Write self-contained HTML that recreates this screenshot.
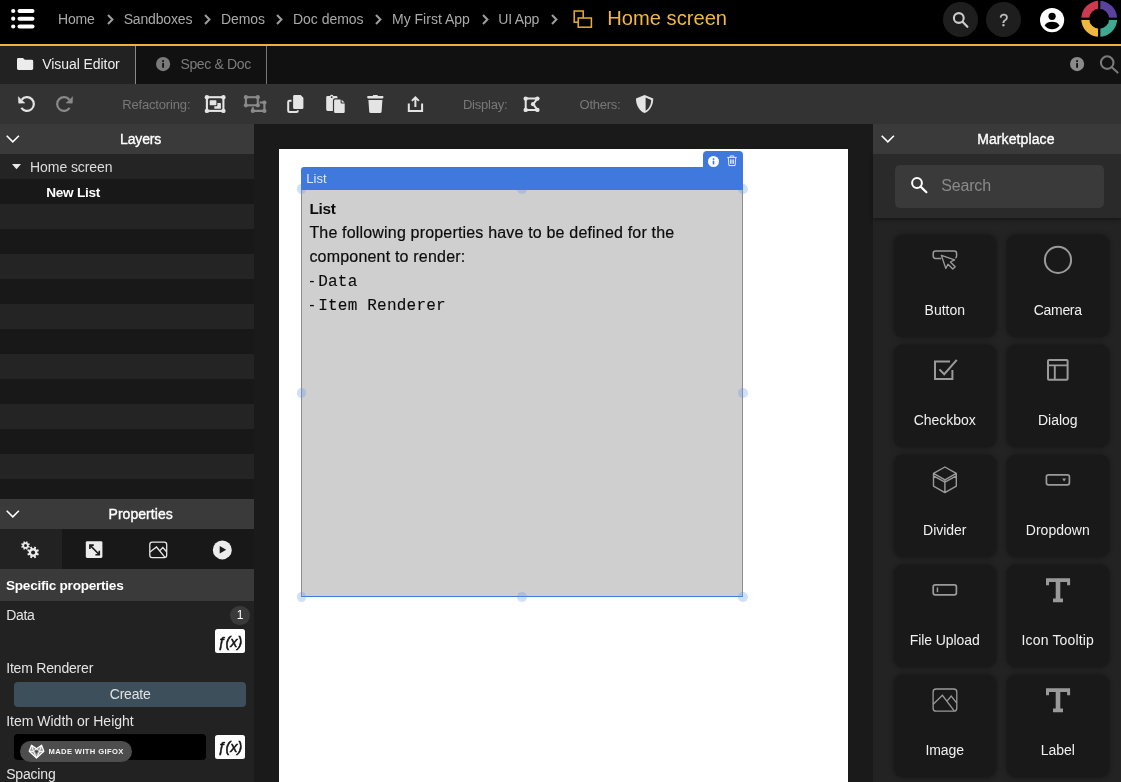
<!DOCTYPE html>
<html>
<head>
<meta charset="utf-8">
<style>
*{box-sizing:border-box;margin:0;padding:0}
html,body{width:1121px;height:782px;overflow:hidden;background:#1a1a1a}
body{font-family:"Liberation Sans",sans-serif;position:relative;color:#fff}
#w{position:absolute;left:0;top:0;width:1121px;height:782px;will-change:transform}
.abs{position:absolute}
.t{position:absolute;white-space:nowrap;line-height:1}
svg{position:absolute;overflow:visible}
</style>
</head>
<body>
<div id="w">
<div class="abs" style="left:0px;top:0px;width:1121px;height:44px;background:#000;"></div>
<div class="abs" style="left:0px;top:44px;width:1121px;height:2px;background:#f2b03a;"></div>
<div class="abs" style="left:0px;top:46px;width:1121px;height:38px;background:#111;"></div>
<div class="abs" style="left:0px;top:46px;width:135px;height:38px;background:#222;"></div>
<div class="abs" style="left:135px;top:46px;width:1px;height:38px;background:#8a8a8a;"></div>
<div class="abs" style="left:266px;top:46px;width:1px;height:38px;background:#777;"></div>
<div class="abs" style="left:0px;top:84px;width:1121px;height:40px;background:#333;"></div>
<div class="abs" style="left:0px;top:124px;width:254px;height:658px;background:#181818;"></div>
<div class="abs" style="left:0px;top:124px;width:254px;height:30px;background:#3a3a3a;"></div>
<div class="abs" style="left:0px;top:154px;width:254px;height:25px;background:#242424;"></div>
<div class="abs" style="left:0px;top:179px;width:254px;height:25px;background:#181818;"></div>
<div class="abs" style="left:0px;top:204px;width:254px;height:25px;background:#242424;"></div>
<div class="abs" style="left:0px;top:229px;width:254px;height:25px;background:#181818;"></div>
<div class="abs" style="left:0px;top:254px;width:254px;height:25px;background:#242424;"></div>
<div class="abs" style="left:0px;top:279px;width:254px;height:25px;background:#181818;"></div>
<div class="abs" style="left:0px;top:304px;width:254px;height:25px;background:#242424;"></div>
<div class="abs" style="left:0px;top:329px;width:254px;height:25px;background:#181818;"></div>
<div class="abs" style="left:0px;top:354px;width:254px;height:25px;background:#242424;"></div>
<div class="abs" style="left:0px;top:379px;width:254px;height:25px;background:#181818;"></div>
<div class="abs" style="left:0px;top:404px;width:254px;height:25px;background:#242424;"></div>
<div class="abs" style="left:0px;top:429px;width:254px;height:25px;background:#181818;"></div>
<div class="abs" style="left:0px;top:454px;width:254px;height:25px;background:#242424;"></div>
<div class="abs" style="left:0px;top:479px;width:254px;height:20px;background:#181818;"></div>
<div class="abs" style="left:0px;top:499px;width:254px;height:30px;background:#3a3a3a;"></div>
<div class="abs" style="left:0px;top:529px;width:254px;height:40px;background:#181818;"></div>
<div class="abs" style="left:0px;top:529px;width:62px;height:40px;background:#222;"></div>
<div class="abs" style="left:0px;top:569px;width:254px;height:32px;background:#3a3a3a;"></div>
<div class="abs" style="left:0px;top:601px;width:254px;height:181px;background:#222;"></div>
<div class="abs" style="left:279px;top:149px;width:569px;height:633px;background:#fff;"></div>
<div class="abs" style="left:873px;top:124px;width:248px;height:658px;background:#232323;"></div>
<div class="abs" style="left:873px;top:154px;width:248px;height:64px;background:#2a2a2a;box-shadow:0 2px 4px rgba(0,0,0,.35);"></div>
<div class="abs" style="left:873px;top:124px;width:248px;height:30px;background:#3a3a3a;"></div>
<svg style="left:0px;top:0px;" width="44" height="44" viewBox="0 0 44 44"><circle cx="13.2" cy="11" r="2.1" fill="#fff"/><rect x="17.5" y="9" width="17" height="4" rx="2" fill="#fff"/><circle cx="13.2" cy="18.7" r="2.1" fill="#fff"/><rect x="17.5" y="16.7" width="17" height="4" rx="2" fill="#fff"/><circle cx="13.2" cy="26.5" r="2.1" fill="#fff"/><rect x="17.5" y="24.5" width="17" height="4" rx="2" fill="#fff"/></svg>
<div class="t" style="left:58.10px;top:12.000px;font-size:14px;color:#a9a9a9;font-weight:400;letter-spacing:-0.187px;">Home</div>
<div class="t" style="left:123.70px;top:12.000px;font-size:14px;color:#a9a9a9;font-weight:400;letter-spacing:-0.167px;">Sandboxes</div>
<div class="t" style="left:221.00px;top:12.000px;font-size:14px;color:#a9a9a9;font-weight:400;letter-spacing:-0.095px;">Demos</div>
<div class="t" style="left:293.00px;top:12.000px;font-size:14px;color:#a9a9a9;font-weight:400;letter-spacing:-0.028px;">Doc demos</div>
<div class="t" style="left:392.00px;top:12.000px;font-size:14px;color:#a9a9a9;font-weight:400;letter-spacing:0.000px;">My First App</div>
<div class="t" style="left:498.30px;top:12.000px;font-size:14px;color:#a9a9a9;font-weight:400;letter-spacing:-0.200px;">UI App</div>
<svg style="left:106.8px;top:13.6px;" width="6.6" height="11" viewBox="0 0 6.6 11"><path d="M1 1 L5.4 5.5 L1 10" fill="none" stroke="#9c9c9c" stroke-width="2.1"/></svg>
<svg style="left:203.8px;top:13.6px;" width="6.6" height="11" viewBox="0 0 6.6 11"><path d="M1 1 L5.4 5.5 L1 10" fill="none" stroke="#9c9c9c" stroke-width="2.1"/></svg>
<svg style="left:275.8px;top:13.6px;" width="6.6" height="11" viewBox="0 0 6.6 11"><path d="M1 1 L5.4 5.5 L1 10" fill="none" stroke="#9c9c9c" stroke-width="2.1"/></svg>
<svg style="left:375px;top:13.6px;" width="6.6" height="11" viewBox="0 0 6.6 11"><path d="M1 1 L5.4 5.5 L1 10" fill="none" stroke="#9c9c9c" stroke-width="2.1"/></svg>
<svg style="left:481.8px;top:13.6px;" width="6.6" height="11" viewBox="0 0 6.6 11"><path d="M1 1 L5.4 5.5 L1 10" fill="none" stroke="#9c9c9c" stroke-width="2.1"/></svg>
<svg style="left:550.6px;top:13.6px;" width="6.6" height="11" viewBox="0 0 6.6 11"><path d="M1 1 L5.4 5.5 L1 10" fill="none" stroke="#9c9c9c" stroke-width="2.1"/></svg>
<svg style="left:573px;top:10px;" width="20" height="18" viewBox="0 0 20 18"><rect x="1.2" y="1" width="9" height="11.2" fill="none" stroke="#ecac32" stroke-width="1.5"/><rect x="5.2" y="8" width="13.2" height="9.2" fill="#000" stroke="#ecac32" stroke-width="1.5"/></svg>
<div class="t" style="left:607.30px;top:8.000px;font-size:20.15px;color:#f4b73b;font-weight:400;">Home screen</div>
<div class="abs" style="left:943px;top:1.8px;width:35px;height:35px;background:#1e1e1e;border-radius:50%;"></div>
<div class="abs" style="left:986px;top:1.8px;width:35px;height:35px;background:#1e1e1e;border-radius:50%;"></div>
<svg style="left:943px;top:1.8px;" width="35" height="35" viewBox="0 0 35 35"><circle cx="15.8" cy="16" r="4.9" fill="none" stroke="#ccc" stroke-width="2.1"/><path d="M19.5 19.8 L24.4 24.8" stroke="#ccc" stroke-width="2.2" stroke-linecap="round"/></svg>
<div class="t" style="left:999.20px;top:13.000px;font-size:16px;color:#c4c4c4;font-weight:400;-webkit-text-stroke:0.3px #c4c4c4;">?</div>
<svg style="left:1039.6px;top:7.6px;" width="24.2" height="24.2" viewBox="0 0 24 24"><circle cx="12" cy="12" r="12" fill="#fff"/><circle cx="12" cy="8.2" r="3.6" fill="#000"/><path d="M4.6 17.4 C6 14.4 9 13.6 12 13.6 C15 13.6 18 14.4 19.4 17.4 C17.8 19.8 15 21.2 12 21.2 C9 21.2 6.2 19.8 4.6 17.4Z" fill="#000"/></svg>
<svg style="left:0px;top:0px;" width="1121" height="44" viewBox="0 0 1121 44"><path d="M1081.20 18.80 A18 18 0 0 1 1099.20 0.80 L1099.20 8.80 A10 10 0 0 0 1089.20 18.80Z" fill="#cc3a50"/><path d="M1099.20 0.80 A18 18 0 0 1 1117.20 18.80 L1109.20 18.80 A10 10 0 0 0 1099.20 8.80Z" fill="#5a419e"/><path d="M1117.20 18.80 A18 18 0 0 1 1099.20 36.80 L1099.20 28.80 A10 10 0 0 0 1109.20 18.80Z" fill="#3fa890"/><path d="M1099.20 36.80 A18 18 0 0 1 1081.20 18.80 L1089.20 18.80 A10 10 0 0 0 1099.20 28.80Z" fill="#f0b73f"/><rect x="1098.05" y="0" width="2.3" height="38" fill="#000"/><rect x="1080" y="17.650000000000002" width="40" height="2.3" fill="#000"/></svg>
<svg style="left:16.9px;top:57.8px;" width="16.2" height="12" viewBox="0 0 16.2 12"><path d="M1.4 0 H6 L7.8 1.8 H14.8 A1.4 1.4 0 0 1 16.2 3.2 V10.6 A1.4 1.4 0 0 1 14.8 12 H1.4 A1.4 1.4 0 0 1 0 10.6 V1.4 A1.4 1.4 0 0 1 1.4 0Z" fill="#ececec"/></svg>
<div class="t" style="left:42.30px;top:57.000px;font-size:14px;color:#ededed;font-weight:400;letter-spacing:-0.073px;">Visual Editor</div>
<svg style="left:156px;top:57px;" width="14.2" height="14.2" viewBox="0 0 14 14"><circle cx="7" cy="7" r="7" fill="#7a7a7a"/><rect x="6.1" y="6" width="1.8" height="4.6" fill="#111"/><rect x="6.1" y="3.2" width="1.8" height="1.8" fill="#111"/></svg>
<div class="t" style="left:180.40px;top:57.000px;font-size:14px;color:#7c7c7c;font-weight:400;letter-spacing:-0.333px;">Spec &amp; Doc</div>
<svg style="left:1069.8px;top:57px;" width="14.2" height="14.2" viewBox="0 0 14 14"><circle cx="7" cy="7" r="7" fill="#8a8a8a"/><rect x="6.1" y="6" width="1.8" height="4.6" fill="#111"/><rect x="6.1" y="3.2" width="1.8" height="1.8" fill="#111"/></svg>
<svg style="left:1099px;top:54px;" width="22" height="22" viewBox="0 0 22 22"><circle cx="8.2" cy="8.6" r="6.3" fill="none" stroke="#7a7a7a" stroke-width="2.1"/><path d="M12.8 13.2 L18.6 18.6" stroke="#7a7a7a" stroke-width="2" stroke-linecap="round"/></svg>
<div class="t" style="left:122.20px;top:98.000px;font-size:13px;color:#787878;font-weight:400;letter-spacing:-0.162px;">Refactoring:</div>
<div class="t" style="left:462.90px;top:98.000px;font-size:13px;color:#787878;font-weight:400;letter-spacing:-0.222px;">Display:</div>
<div class="t" style="left:579.60px;top:98.000px;font-size:13px;color:#787878;font-weight:400;letter-spacing:-0.258px;">Others:</div>
<svg style="left:0;top:0" width="1121" height="782" viewBox="0 0 1121 782"><path d="M21.68 99.74 A6.85 6.85 0 1 1 21.39 107.98" fill="none" stroke="#e4e4e4" stroke-width="2.2"/><path d="M18.30 96.75 L18.70 103.15 L24.80 103.05Z" fill="#e4e4e4" stroke="#e4e4e4" stroke-width="0.5" stroke-linejoin="round"/><g transform="translate(128.00,0) scale(-1,1)"><path d="M58.68 99.74 A6.85 6.85 0 1 1 58.39 107.98" fill="none" stroke="#8a8a8a" stroke-width="2.2"/><path d="M55.30 96.75 L55.70 103.15 L61.80 103.05Z" fill="#8a8a8a" stroke="#8a8a8a" stroke-width="0.5" stroke-linejoin="round"/></g><rect x="206.9" y="97.2" width="16.5" height="13.7" fill="none" stroke="#e4e4e4" stroke-width="2.1"/><circle cx="206.9" cy="97.2" r="2.2" fill="#e4e4e4"/><circle cx="223.4" cy="97.2" r="2.2" fill="#e4e4e4"/><circle cx="206.9" cy="110.9" r="2.2" fill="#e4e4e4"/><circle cx="223.4" cy="110.9" r="2.2" fill="#e4e4e4"/><rect x="209.7" y="100.3" width="6.7" height="4.9" rx="0.6" fill="#e4e4e4"/><path d="M217.4 103.1 H220.3 A0.6 0.6 0 0 1 220.9 103.7 V108.2 A0.6 0.6 0 0 1 220.3 108.8 H214.9 A0.6 0.6 0 0 1 214.3 108.2 V106.2 H216.4 A1 1 0 0 0 217.4 105.2Z" fill="#e4e4e4"/><rect x="245.9" y="97.2" width="11.9" height="8.1" fill="none" stroke="#8a8a8a" stroke-width="2.1"/><circle cx="245.9" cy="97.2" r="2.1" fill="#8a8a8a"/><circle cx="257.8" cy="97.2" r="2.1" fill="#8a8a8a"/><circle cx="245.9" cy="105.3" r="2.1" fill="#8a8a8a"/><circle cx="257.8" cy="105.3" r="2.1" fill="#8a8a8a"/><path d="M259.6 102.5 H264.4 V110.9 H252.8 V107.2" fill="none" stroke="#8a8a8a" stroke-width="2.1"/><circle cx="264.4" cy="102.5" r="2.1" fill="#8a8a8a"/><circle cx="264.4" cy="110.9" r="2.1" fill="#8a8a8a"/><circle cx="252.8" cy="110.9" r="2.1" fill="#8a8a8a"/><path d="M294.5 95 H300.6 L303.4 97.8 V107.7 A1.4 1.4 0 0 1 302 109.1 H294.5 A1.4 1.4 0 0 1 293.1 107.7 V96.4 A1.4 1.4 0 0 1 294.5 95Z" fill="#e4e4e4"/><path d="M291.6 100.7 H289.6 A1.4 1.4 0 0 0 288.2 102.1 V110.7 A1.4 1.4 0 0 0 289.6 112.1 H296.4 A1.4 1.4 0 0 0 297.8 110.7 V110.3" fill="none" stroke="#e4e4e4" stroke-width="2"/><path d="M327.6 95.9 H330 A1.8 1.8 0 0 1 333.4 95.9 H336.1 A1.4 1.4 0 0 1 337.5 97.3 V98.2 H335.2 A2.3 2.3 0 0 0 332.9 100.5 V110.9 H327.6 A1.4 1.4 0 0 1 326.2 109.5 V97.3 A1.4 1.4 0 0 1 327.6 95.9Z" fill="#e4e4e4"/><circle cx="331.7" cy="97.2" r="0.9" fill="#333"/><path d="M335.4 99.5 H340.6 V102.4 A1 1 0 0 0 341.6 103.4 H344.7 V111.8 A1.3 1.3 0 0 1 343.4 113.1 H335.4 A1.3 1.3 0 0 1 334.1 111.8 V100.8 A1.3 1.3 0 0 1 335.4 99.5Z" fill="#e4e4e4"/><path d="M341.7 99.7 L344.5 102.4 H341.7Z" fill="#e4e4e4"/><path d="M368 95.9 H372.6 L373.4 94.9 H377.3 L378.1 95.9 H382.6 A0.8 0.8 0 0 1 383.4 96.7 V97.6 A0.8 0.8 0 0 1 382.6 98.4 H368 A0.8 0.8 0 0 1 367.2 97.6 V96.7 A0.8 0.8 0 0 1 368 95.9Z" fill="#e4e4e4"/><path d="M368.4 99.9 H382.4 L381.6 111.5 A1.6 1.6 0 0 1 380 113 H370.8 A1.6 1.6 0 0 1 369.2 111.5Z" fill="#e4e4e4"/><path d="M408.8 103.4 V110.9 H422.1 V103.4" fill="none" stroke="#e4e4e4" stroke-width="2"/><path d="M415.4 106.9 V98 M411.9 100.9 L415.4 97.4 L418.9 100.9" fill="none" stroke="#e4e4e4" stroke-width="2"/><path d="M537.4 98.6 H525.7 V109.9 H537.4 L533.2 104.2Z" fill="none" stroke="#e4e4e4" stroke-width="2" stroke-linejoin="round"/><circle cx="525.7" cy="98.6" r="2.2" fill="#e4e4e4"/><circle cx="537.4" cy="98.6" r="2.2" fill="#e4e4e4"/><circle cx="525.7" cy="109.9" r="2.2" fill="#e4e4e4"/><circle cx="537.4" cy="109.9" r="2.2" fill="#e4e4e4"/><circle cx="533.0" cy="104.2" r="2.1" fill="#e4e4e4"/><path d="M644.6 95 L653.2 98.5 C653.2 106 649.6 111 644.6 113.1 C639.6 111 636 106 636 98.5Z" fill="#e4e4e4"/><path d="M645.6 97.6 L651.2 99.9 C651 105 648.8 108.8 645.6 110.7Z" fill="#333"/></svg>

<svg style="left:6.4px;top:135px;" width="13.6" height="7.6" viewBox="0 0 13.6 7.6"><path d="M0.7 0.8 L6.8 6.8 L12.9 0.8" fill="none" stroke="#fff" stroke-width="1.6"/></svg>
<div class="t" style="left:120.10px;top:132.000px;font-size:14px;color:#fff;font-weight:400;letter-spacing:-0.150px;-webkit-text-stroke:0.35px #fff;">Layers</div>
<svg style="left:12.2px;top:164px;" width="9" height="5.3" viewBox="0 0 9 5.3"><path d="M0 0 H9 L4.5 5.3Z" fill="#e8e8e8"/></svg>
<div class="t" style="left:30.10px;top:160.000px;font-size:14px;color:#dcdcdc;font-weight:400;letter-spacing:-0.081px;">Home screen</div>
<div class="t" style="left:46.20px;top:186.000px;font-size:13.6px;color:#fff;font-weight:700;letter-spacing:-0.252px;">New List</div>
<svg style="left:6.4px;top:510.4px;" width="13.6" height="7.6" viewBox="0 0 13.6 7.6"><path d="M0.7 0.8 L6.8 6.8 L12.9 0.8" fill="none" stroke="#fff" stroke-width="1.6"/></svg>
<div class="t" style="left:108.50px;top:507.000px;font-size:14px;color:#fff;font-weight:400;letter-spacing:0.046px;-webkit-text-stroke:0.35px #fff;">Properties</div>
<svg style="left:0;top:0" width="1121" height="782" viewBox="0 0 1121 782"><path d="M29.87 546.58 L29.36 547.82 L28.07 547.40 L27.40 548.07 L27.82 549.36 L26.58 549.87 L25.98 548.66 L25.02 548.66 L24.42 549.87 L23.18 549.36 L23.60 548.07 L22.93 547.40 L21.64 547.82 L21.13 546.58 L22.34 545.98 L22.34 545.02 L21.13 544.42 L21.64 543.18 L22.93 543.60 L23.60 542.93 L23.18 541.64 L24.42 541.13 L25.02 542.34 L25.98 542.34 L26.58 541.13 L27.82 541.64 L27.40 542.93 L28.07 543.60 L29.36 543.18 L29.87 544.42 L28.66 545.02 L28.66 545.98Z" fill="#ececec"/><circle cx="25.5" cy="545.5" r="1.5" fill="#222"/><path d="M38.92 553.85 L38.24 555.49 L36.56 554.95 L35.65 555.86 L36.19 557.54 L34.55 558.22 L33.74 556.65 L32.46 556.65 L31.65 558.22 L30.01 557.54 L30.55 555.86 L29.64 554.95 L27.96 555.49 L27.28 553.85 L28.85 553.04 L28.85 551.76 L27.28 550.95 L27.96 549.31 L29.64 549.85 L30.55 548.94 L30.01 547.26 L31.65 546.58 L32.46 548.15 L33.74 548.15 L34.55 546.58 L36.19 547.26 L35.65 548.94 L36.56 549.85 L38.24 549.31 L38.92 550.95 L37.35 551.76 L37.35 553.04Z" fill="#ececec"/><circle cx="33.1" cy="552.4" r="2.0" fill="#222"/><rect x="85.8" y="541.2" width="16.6" height="16.7" rx="1.4" fill="#ececec"/><path d="M90.2 545.4 L98.9 554.3 M89.9 549 V545.1 H93.8 M95.4 554.7 H99.3 V550.8" fill="none" stroke="#1a1a1a" stroke-width="1.6"/><rect x="149.8" y="542.2" width="16.9" height="15.4" rx="2.4" fill="none" stroke="#e8e8e8" stroke-width="1.3"/><path d="M150 552 L156.5 547 L164.8 557.2 M159.9 550.6 L162.8 547.5 L166.6 551.8" fill="none" stroke="#e8e8e8" stroke-width="1.3"/><circle cx="222.3" cy="549.9" r="9.5" fill="#ececec"/><path d="M219.7 546 V553.4 L226.2 549.7Z" fill="#1a1a1a"/></svg>

<div class="t" style="left:6.00px;top:579.000px;font-size:13.6px;color:#fff;font-weight:700;letter-spacing:-0.261px;">Specific properties</div>
<div class="t" style="left:6.20px;top:608.000px;font-size:14px;color:#e4e4e4;font-weight:400;letter-spacing:-0.317px;">Data</div>
<div class="abs" style="left:230.3px;top:605.5px;width:19.4px;height:19.4px;background:#3a3a3a;border-radius:50%;"></div>
<div class="t" style="left:236.80px;top:609.000px;font-size:12px;color:#fff;font-weight:400;">1</div>
<div class="t" style="left:6.20px;top:661.000px;font-size:14px;color:#e4e4e4;font-weight:400;letter-spacing:-0.197px;">Item Renderer</div>
<div class="abs" style="left:14px;top:681.5px;width:232.3px;height:25px;background:#3d4f5b;border-radius:4px;"></div>
<div class="t" style="left:109.70px;top:687.000px;font-size:14px;color:#e2e2e2;font-weight:400;letter-spacing:-0.170px;">Create</div>
<div class="t" style="left:6.20px;top:714.000px;font-size:14px;color:#e4e4e4;font-weight:400;letter-spacing:-0.005px;">Item Width or Height</div>
<div class="abs" style="left:14px;top:734.3px;width:192px;height:25.3px;background:#000;border-radius:4px;"></div>
<div class="t" style="left:6.20px;top:767.000px;font-size:14px;color:#e4e4e4;font-weight:400;letter-spacing:-0.186px;">Spacing</div>
<div class="abs" style="left:215px;top:629px;width:30.2px;height:24px;background:#fff;border-radius:2.5px;"></div>
<div class="t" style="left:217.60px;top:635.000px;font-size:14.5px;color:#111;font-weight:400;font-style:italic;-webkit-text-stroke:0.5px #111;letter-spacing:-0.1px;">ƒ(x)</div>
<div class="abs" style="left:215px;top:734.9px;width:30.2px;height:24px;background:#fff;border-radius:2.5px;"></div>
<div class="t" style="left:217.60px;top:740.000px;font-size:14.5px;color:#111;font-weight:400;font-style:italic;-webkit-text-stroke:0.5px #111;letter-spacing:-0.1px;">ƒ(x)</div>
<div class="abs" style="left:20.2px;top:741px;width:111.6px;height:21px;border-radius:10.5px;background:#4d4d4d"></div>
<svg style="left:0;top:0" width="1121" height="782" viewBox="0 0 1121 782"><path d="M31.5 745.2 L36.5 748.7 L41.6 745.2 L43.9 751.2 L36.5 758 L29.2 751.2Z" fill="rgba(255,255,255,0.45)" stroke="#fff" stroke-width="1.2" stroke-linejoin="round"/><path d="M31.5 745.2 L33.6 751.6 L36.5 758 L39.4 751.6 L41.6 745.2 M29.2 751.2 L33.6 751.6 L36.5 748.7 L39.4 751.6 L43.9 751.2" fill="none" stroke="#fff" stroke-width="0.9" stroke-linejoin="round"/><path d="M34.4 750.4 H38.6 L36.5 753.8Z" fill="#444"/></svg>

<div class="t" style="left:48.60px;top:748.000px;font-size:7.6px;color:#f4f4f4;font-weight:700;letter-spacing:0.36px;">MADE WITH GIFOX</div>
<div class="abs" style="left:301.3px;top:189.7px;width:441.7px;height:407.3px;background:#cfcfcf;border:1px solid #8c8c8c;border-bottom:1px solid #4079de;border-top:none;"></div>
<div class="abs" style="left:296.5px;top:184.2px;width:9.6px;height:9.6px;border-radius:50%;background:rgba(100,150,240,0.3)"></div>
<div class="abs" style="left:517.2px;top:184.2px;width:9.6px;height:9.6px;border-radius:50%;background:rgba(100,150,240,0.3)"></div>
<div class="abs" style="left:738.0px;top:184.2px;width:9.6px;height:9.6px;border-radius:50%;background:rgba(100,150,240,0.3)"></div>
<div class="abs" style="left:296.5px;top:388.2px;width:9.6px;height:9.6px;border-radius:50%;background:rgba(100,150,240,0.3)"></div>
<div class="abs" style="left:738.0px;top:388.2px;width:9.6px;height:9.6px;border-radius:50%;background:rgba(100,150,240,0.3)"></div>
<div class="abs" style="left:296.5px;top:592.2px;width:9.6px;height:9.6px;border-radius:50%;background:rgba(100,150,240,0.3)"></div>
<div class="abs" style="left:517.2px;top:592.2px;width:9.6px;height:9.6px;border-radius:50%;background:rgba(100,150,240,0.3)"></div>
<div class="abs" style="left:738.0px;top:592.2px;width:9.6px;height:9.6px;border-radius:50%;background:rgba(100,150,240,0.3)"></div>
<div class="abs" style="left:703px;top:151px;width:40px;height:17px;background:#4079de;border-radius:4px 4px 0 0;"></div>
<div class="abs" style="left:301.3px;top:167px;width:441.7px;height:23px;background:#4079de;border-radius:3px 0 0 0;"></div>
<div class="t" style="left:306.30px;top:172.000px;font-size:13px;color:#dfe8fb;font-weight:400;letter-spacing:0.066px;">List</div>
<div class="t" style="left:309.40px;top:201.000px;font-size:15.4px;color:#0c0c0c;font-weight:700;letter-spacing:-0.293px;">List</div>
<div class="t" style="left:309.40px;top:225.000px;font-size:16px;color:#0c0c0c;font-weight:400;letter-spacing:0.179px;-webkit-text-stroke:0.2px #0c0c0c;">The following properties have to be defined for the</div>
<div class="t" style="left:309.40px;top:249.000px;font-size:16px;color:#0c0c0c;font-weight:400;letter-spacing:0.195px;-webkit-text-stroke:0.2px #0c0c0c;">component to render:</div>
<div class="t" style="left:309.30px;top:273.000px;font-size:16px;color:#0c0c0c;font-weight:400;">-</div>
<div class="t" style="left:318.20px;top:274.000px;font-size:16px;color:#0c0c0c;font-weight:400;font-family:'Liberation Mono',monospace;letter-spacing:0.22px;-webkit-text-stroke:0.12px #0c0c0c;">Data</div>
<div class="t" style="left:309.30px;top:297.000px;font-size:16px;color:#0c0c0c;font-weight:400;">-</div>
<div class="t" style="left:318.20px;top:298.000px;font-size:16px;color:#0c0c0c;font-weight:400;font-family:'Liberation Mono',monospace;letter-spacing:0.22px;-webkit-text-stroke:0.12px #0c0c0c;">Item Renderer</div>
<svg style="left:708.3px;top:155.6px;" width="11" height="11" viewBox="0 0 11 11"><circle cx="5.5" cy="5.5" r="5.5" fill="#fff"/><rect x="4.7" y="4.7" width="1.6" height="3.7" fill="#4079de"/><rect x="4.7" y="2.3" width="1.6" height="1.6" fill="#4079de"/></svg>
<svg style="left:727px;top:155.4px;" width="10" height="11.4" viewBox="0 0 10 11.4"><path d="M0.3 2.4 H9.7 M3.3 2.2 V0.9 H6.7 V2.2 M1.3 2.6 L1.9 10.6 H8.1 L8.7 2.6 M3.6 4.4 V8.8 M5 4.4 V8.8 M6.4 4.4 V8.8" fill="none" stroke="#e4ecfc" stroke-width="1"/></svg>
<svg style="left:881.4px;top:135px;" width="13.6" height="7.6" viewBox="0 0 13.6 7.6"><path d="M0.7 0.8 L6.8 6.8 L12.9 0.8" fill="none" stroke="#fff" stroke-width="1.6"/></svg>
<div class="t" style="left:977.20px;top:132.000px;font-size:14px;color:#fff;font-weight:400;letter-spacing:0.099px;-webkit-text-stroke:0.35px #fff;">Marketplace</div>
<div class="abs" style="left:895px;top:165px;width:209px;height:43.3px;background:#3a3a3a;border-radius:5px;"></div>
<svg style="left:911px;top:177.2px;" width="17" height="16.5" viewBox="0 0 17 16.5"><circle cx="6" cy="6" r="4.9" fill="none" stroke="#fff" stroke-width="2"/><path d="M9.6 9.6 L15.4 15.2" stroke="#fff" stroke-width="2.2" stroke-linecap="round"/></svg>
<div class="t" style="left:941.20px;top:178.000px;font-size:16px;color:#8a8a8a;font-weight:400;letter-spacing:-0.164px;">Search</div>
<div class="abs" style="left:894px;top:235px;width:101.5px;height:102px;background:#191919;border-radius:9px;box-shadow:0 0 5px rgba(0,0,0,.5)"></div>
<div class="t" style="left:894.00px;top:303.000px;font-size:14px;color:#f0f0f0;font-weight:400;letter-spacing:-0.029px;width:101.5px;text-align:center;">Button</div>
<div class="abs" style="left:1007px;top:235px;width:101.5px;height:102px;background:#191919;border-radius:9px;box-shadow:0 0 5px rgba(0,0,0,.5)"></div>
<div class="t" style="left:1007.00px;top:303.000px;font-size:14px;color:#f0f0f0;font-weight:400;letter-spacing:-0.314px;width:101.5px;text-align:center;">Camera</div>
<div class="abs" style="left:894px;top:345px;width:101.5px;height:102px;background:#191919;border-radius:9px;box-shadow:0 0 5px rgba(0,0,0,.5)"></div>
<div class="t" style="left:894.00px;top:413.000px;font-size:14px;color:#f0f0f0;font-weight:400;letter-spacing:-0.033px;width:101.5px;text-align:center;">Checkbox</div>
<div class="abs" style="left:1007px;top:345px;width:101.5px;height:102px;background:#191919;border-radius:9px;box-shadow:0 0 5px rgba(0,0,0,.5)"></div>
<div class="t" style="left:1007.00px;top:413.000px;font-size:14px;color:#f0f0f0;font-weight:400;letter-spacing:-0.047px;width:101.5px;text-align:center;">Dialog</div>
<div class="abs" style="left:894px;top:455px;width:101.5px;height:102px;background:#191919;border-radius:9px;box-shadow:0 0 5px rgba(0,0,0,.5)"></div>
<div class="t" style="left:894.00px;top:523.000px;font-size:14px;color:#f0f0f0;font-weight:400;letter-spacing:-0.044px;width:101.5px;text-align:center;">Divider</div>
<div class="abs" style="left:1007px;top:455px;width:101.5px;height:102px;background:#191919;border-radius:9px;box-shadow:0 0 5px rgba(0,0,0,.5)"></div>
<div class="t" style="left:1007.00px;top:523.000px;font-size:14px;color:#f0f0f0;font-weight:400;letter-spacing:0.023px;width:101.5px;text-align:center;">Dropdown</div>
<div class="abs" style="left:894px;top:565px;width:101.5px;height:102px;background:#191919;border-radius:9px;box-shadow:0 0 5px rgba(0,0,0,.5)"></div>
<div class="t" style="left:894.00px;top:633.000px;font-size:14px;color:#f0f0f0;font-weight:400;letter-spacing:-0.074px;width:101.5px;text-align:center;">File Upload</div>
<div class="abs" style="left:1007px;top:565px;width:101.5px;height:102px;background:#191919;border-radius:9px;box-shadow:0 0 5px rgba(0,0,0,.5)"></div>
<div class="t" style="left:1007.00px;top:633.000px;font-size:14px;color:#f0f0f0;font-weight:400;letter-spacing:0.168px;width:101.5px;text-align:center;">Icon Tooltip</div>
<div class="abs" style="left:894px;top:675px;width:101.5px;height:102px;background:#191919;border-radius:9px;box-shadow:0 0 5px rgba(0,0,0,.5)"></div>
<div class="t" style="left:894.00px;top:743.000px;font-size:14px;color:#f0f0f0;font-weight:400;letter-spacing:-0.056px;width:101.5px;text-align:center;">Image</div>
<div class="abs" style="left:1007px;top:675px;width:101.5px;height:102px;background:#191919;border-radius:9px;box-shadow:0 0 5px rgba(0,0,0,.5)"></div>
<div class="t" style="left:1007.00px;top:743.000px;font-size:14px;color:#f0f0f0;font-weight:400;letter-spacing:-0.049px;width:101.5px;text-align:center;">Label</div>
<svg style="left:0;top:0" width="1121" height="782" viewBox="0 0 1121 782"><path d="M941.2 258.4 H935.6 A2.4 2.4 0 0 1 933.2 256 V253.4 A2.4 2.4 0 0 1 935.6 251 H954.2 A2.4 2.4 0 0 1 956.6 253.4 V256 A2.4 2.4 0 0 1 955.4 258.1" fill="none" stroke="#9a9a9a" stroke-width="1.5"/><path d="M941.4 255.4 L954.6 259.8 L950.4 262 L955.2 266.8 L952.8 269 L948 264.2 L945.8 268.4Z" fill="none" stroke="#9a9a9a" stroke-width="1.4" stroke-linejoin="round"/><circle cx="1058" cy="259.9" r="13.1" fill="none" stroke="#9a9a9a" stroke-width="2"/><path d="M950 361.6 H935 V379 H952.4 V370" fill="none" stroke="#9a9a9a" stroke-width="2"/><path d="M939.4 369.4 L944.2 374.2 L956.8 359.8" fill="none" stroke="#9a9a9a" stroke-width="2"/><rect x="1048" y="360" width="19.6" height="19.8" rx="1" fill="none" stroke="#9a9a9a" stroke-width="2"/><path d="M1048 365.4 H1067.6 M1054.8 365.4 V379.8" fill="none" stroke="#9a9a9a" stroke-width="1.9"/><path d="M944.9 467 L956.3 473.4 V486.2 L944.9 492.6 L933.5 486.2 V473.4Z M933.5 473.4 L944.9 479.8 L956.3 473.4 M944.9 479.8 V492.6 M933.5 475.8 L944.9 482.2 L956.3 475.8" fill="none" stroke="#9a9a9a" stroke-width="1.4" stroke-linejoin="round"/><rect x="1046.4" y="474.8" width="23" height="10" rx="2" fill="none" stroke="#9a9a9a" stroke-width="1.7"/><path d="M1062.2 478.4 H1066 L1064.1 481.4Z" fill="#9a9a9a"/><rect x="933.2" y="584.8" width="23.2" height="10" rx="2" fill="none" stroke="#9a9a9a" stroke-width="1.7"/><rect x="936.7" y="587.4" width="1.5" height="4.8" fill="#9a9a9a"/><path d="M1046 578.3 H1070.1 V585.1999999999999 H1067.1 V582.0 H1060.3 V598.5 H1063 V602.1999999999999 H1053 V598.5 H1055.7 V582.0 H1049 V585.1999999999999 H1046Z" fill="#9a9a9a"/><path d="M1046 688.3 H1070.1 V695.1999999999999 H1067.1 V692.0 H1060.3 V708.5 H1063 V712.1999999999999 H1053 V708.5 H1055.7 V692.0 H1049 V695.1999999999999 H1046Z" fill="#9a9a9a"/><rect x="933.1" y="689" width="23.7" height="22.2" rx="3" fill="none" stroke="#9a9a9a" stroke-width="1.3"/><path d="M933.2 704.2 L942.4 695.3 L954.2 710.8 M947 701.2 L951.2 696 L956.6 702.8" fill="none" stroke="#9a9a9a" stroke-width="1.3"/></svg>

</div>
</body>
</html>
